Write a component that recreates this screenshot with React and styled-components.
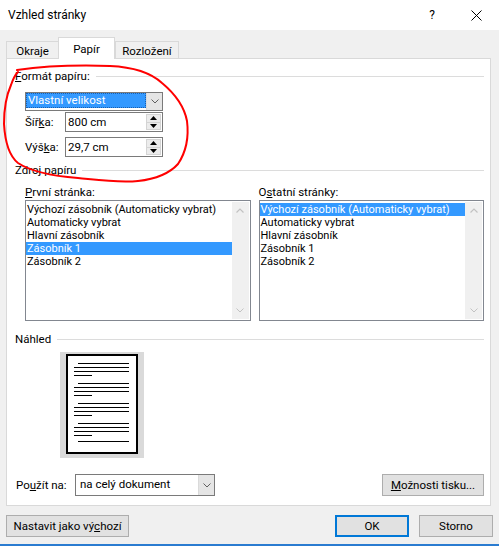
import React from 'react';
import styled, { createGlobalStyle } from 'styled-components';

const GlobalStyle = createGlobalStyle`
  html, body { margin: 0; padding: 0; background: #fff; }
  body {
    font-family: "Segoe UI", Roboto, "Noto Sans", sans-serif;
    font-size: 11.5px;
    color: #000;
  }
  * { box-sizing: border-box; }
`;

const Window = styled.div`
  position: relative;
  width: 499px;
  height: 546px;
  background: #f0f0f0;
  border-bottom: 2px solid #2a7bd0;
  display: flex;
  flex-direction: column;
  overflow: hidden;
`;

const TitleBar = styled.div`
  height: 30px;
  background: #fff;
  display: flex;
  align-items: center;
  padding: 0 17px 0 8px;
`;

const Title = styled.div`
  flex: 1;
  font-size: 12px;
  line-height: 16px;
`;

const TitleButton = styled.div`
  width: ${({ $w }) => $w}px;
  margin-right: ${({ $mr }) => $mr || 0}px;
  display: flex;
  justify-content: center;
  align-items: center;
  font-size: 12px;
  line-height: 16px;
`;

const Body = styled.div`
  flex: 1;
  padding: 0 6px;
  display: flex;
  flex-direction: column;
`;

const TabRow = styled.div`
  height: 29px;
  display: flex;
  align-items: flex-end;
`;

const Tab = styled.div`
  position: relative;
  width: ${({ $w }) => $w}px;
  height: ${({ $active }) => ($active ? 22 : 17)}px;
  margin-bottom: ${({ $active }) => ($active ? 0 : 1)}px;
  margin-left: ${({ $ml }) => $ml || 0}px;
  padding-top: ${({ $active }) => ($active ? 0 : 1)}px;
  background: ${({ $active }) => ($active ? '#fff' : '#f0f0f0')};
  border: 1px solid #d9d9d9;
  border-bottom: none;
  z-index: ${({ $active }) => ($active ? 2 : 1)};
  display: flex;
  align-items: center;
  justify-content: center;
  line-height: 16px;
`;

const Panel = styled.div`
  margin-top: -1px;
  width: 485px;
  height: 448px;
  background: #fff;
  border: 1px solid #d9d9d9;
  padding: 0 6px 0 8px;
  display: flex;
  flex-direction: column;
`;

const Heading = styled.div`
  margin-top: ${({ $mt }) => $mt}px;
  height: 16px;
  line-height: 16px;
  display: flex;
  align-items: center;
  gap: 6px;
  &::after {
    content: '';
    flex: 1;
    height: 1px;
    background: #dcdcdc;
  }
`;

const Indent = styled.div`
  padding-left: 10px;
  display: flex;
  flex-direction: column;
`;

const Key = styled.span`
  text-decoration: underline;
`;

const Combo = styled.div`
  margin-top: ${({ $mt }) => $mt || 0}px;
  width: ${({ $w }) => $w}px;
  height: ${({ $h }) => $h}px;
  border: 1px solid #7a7a7a;
  background: #fff;
  display: flex;
  align-items: stretch;
`;

const ComboValue = styled.div`
  flex: 1;
  padding-left: ${({ $sel }) => ($sel ? 2 : 4)}px;
  line-height: ${({ $sel }) => ($sel ? 14 : 19)}px;
  height: ${({ $sel }) => ($sel ? '15px' : 'auto')};
  background: ${({ $sel }) => ($sel ? '#3399ff' : 'transparent')};
  color: ${({ $sel }) => ($sel ? '#fff' : '#000')};
  outline: ${({ $sel }) => ($sel ? '1px dotted #1a5fb0' : 'none')};
  outline-offset: -1px;
  white-space: nowrap;
`;

const DropButton = styled.div`
  width: 16px;
  background: #e5e5e5;
  border-left: 1px solid #dadada;
  display: flex;
  align-items: center;
  justify-content: center;
`;

const FieldRow = styled.div`
  margin-top: ${({ $mt }) => $mt}px;
  height: 20px;
  display: flex;
  align-items: center;
`;

const FieldLabel = styled.div`
  width: 40px;
  line-height: 16px;
`;

const SpinBox = styled.div`
  width: 98px;
  height: 20px;
  border: 1px solid #7a7a7a;
  background: #fff;
  display: flex;
`;

const SpinValue = styled.div`
  flex: 1;
  padding-left: 2px;
  line-height: 18px;
`;

const Spinner = styled.div`
  width: 15px;
  margin: 1px 1px 1px 0;
  border: 1px solid #d4d4d4;
  background: #d4d4d4;
  display: flex;
  flex-direction: column;
  gap: 1px;
`;

const SpinHalf = styled.div`
  flex: 1;
  background: #ececec;
  display: flex;
  align-items: center;
  justify-content: center;
`;

const Columns = styled.div`
  margin-top: 6px;
  display: flex;
  gap: 8px;
`;

const Column = styled.div`
  width: 226px;
  display: flex;
  flex-direction: column;
`;

const ColumnLabel = styled.div`
  height: 16px;
  line-height: 16px;
`;

const ListBox = styled.div`
  height: 121px;
  border: 1px solid #828790;
  background: #fff;
  display: flex;
`;

const ListItems = styled.div`
  flex: 1;
  padding-top: 2px;
`;

const ListItem = styled.div`
  height: 13px;
  font-size: 11px;
  line-height: 13px;
  padding-left: 1px;
  white-space: nowrap;
  overflow: hidden;
  background: ${({ $sel }) => ($sel ? '#3399ff' : 'transparent')};
  color: ${({ $sel }) => ($sel ? '#fff' : '#000')};
`;

const ScrollBar = styled.div`
  width: 17px;
  margin: 1px 1px 1px 0;
  background: #f0f0f0;
  display: flex;
  flex-direction: column;
  justify-content: space-between;
  align-items: center;
  padding: 6px 0;
`;

const PreviewFrame = styled.div`
  margin-top: 5px;
  margin-left: 45px;
  width: 84px;
  height: 106px;
  background: #dadada;
  padding: 2px 6px;
`;

const Paper = styled.div`
  width: 72px;
  height: 100px;
  background: #fff;
  border: 2px solid #000;
`;

const ApplyRow = styled.div`
  margin-top: 16px;
  height: 22px;
  display: flex;
  align-items: center;
`;

const ApplyLabel = styled.div`
  width: 60px;
  padding-left: 1px;
  line-height: 16px;
`;

const Spacer = styled.div`
  flex: 1;
`;

const Button = styled.div`
  width: ${({ $w }) => $w}px;
  height: 22px;
  background: #e1e1e1;
  border: ${({ $default }) => ($default ? '2px solid #0078d7' : '1px solid #adadad')};
  display: flex;
  align-items: center;
  justify-content: center;
  line-height: 16px;
  white-space: nowrap;
`;

const ButtonRow = styled.div`
  margin-top: 9px;
  display: flex;
  gap: 10px;
`;

const Annotation = styled.svg`
  position: absolute;
  left: 0;
  top: 0;
  pointer-events: none;
  z-index: 5;
`;

const Chevron = ({ color = '#606060' }) => (
  <svg width="8" height="5" viewBox="0 0 8 5">
    <path d="M0.5 0.5 L4 4 L7.5 0.5" fill="none" stroke={color} strokeWidth="1" />
  </svg>
);

const ChevronUp = () => (
  <svg width="8" height="5" viewBox="0 0 8 5">
    <path d="M0.5 4.5 L4 1 L7.5 4.5" fill="none" stroke="#c2c2c2" strokeWidth="1.2" />
  </svg>
);

const Triangle = ({ up }) => (
  <svg width="7" height="4" viewBox="0 0 7 4">
    <path d={up ? 'M0 4 L3.5 0 L7 4 Z' : 'M0 0 L3.5 4 L7 0 Z'} fill="#000" />
  </svg>
);

const trays = [
  'Výchozí zásobník (Automaticky vybrat)',
  'Automaticky vybrat',
  'Hlavní zásobník',
  'Zásobník 1',
  'Zásobník 2',
];

const TrayList = ({ selected }) => (
  <ListBox>
    <ListItems>
      {trays.map((t, i) => (
        <ListItem key={t} $sel={i === selected}>{t}</ListItem>
      ))}
    </ListItems>
    <ScrollBar>
      <ChevronUp />
      <Chevron color="#c2c2c2" />
    </ScrollBar>
  </ListBox>
);

const PaperLines = () => {
  const lines = [];
  [9, 29, 49, 69].forEach((y) => {
    lines.push([10, 61, y], [6, 61, y + 4], [6, 61, y + 8], [6, 24, y + 12]);
  });
  lines.push([10, 61, 87]);
  return (
    <svg width="68" height="96" viewBox="0 0 68 96">
      {lines.map(([x1, x2, y], i) => (
        <line key={i} x1={x1} x2={x2} y1={y - 1.5} y2={y - 1.5} stroke="#000" strokeWidth="1" />
      ))}
    </svg>
  );
};

const circle =
  'M 17 70 C 45 66, 80 65, 110 66 C 132 67, 150 72, 162 83 C 174 93, 184 105, 187 121 C 189 137, 186 152, 178 164 C 169 174, 156 179, 138 181 C 118 183, 98 180, 78 178 C 53 176, 30 171, 18 163 C 8 155, 5 141, 4 124 C 4 108, 7 94, 11 85 C 13 79, 15 75, 18 72';

export default function App() {
  return (
    <>
      <GlobalStyle />
      <Window>
        <TitleBar>
          <Title>Vzhled stránky</Title>
          <TitleButton $w={10} $mr={34}>?</TitleButton>
          <TitleButton $w={11}>
            <svg width="11" height="11" viewBox="0 0 11 11">
              <path d="M0.5 0.5 L10.5 10.5 M10.5 0.5 L0.5 10.5" stroke="#000" strokeWidth="1" />
            </svg>
          </TitleButton>
        </TitleBar>
        <Body>
          <TabRow>
            <Tab $w={53}>Okraje</Tab>
            <Tab $w={57} $ml={-1} $active>Papír</Tab>
            <Tab $w={64}>Rozložení</Tab>
          </TabRow>
          <Panel>
            <Heading $mt={9}>
              <span><Key>F</Key>ormát papíru:</span>
            </Heading>
            <Indent>
              <Combo $mt={8} $w={138} $h={19}>
                <ComboValue $sel>Vlastní velikost</ComboValue>
                <DropButton><Chevron /></DropButton>
              </Combo>
              <FieldRow $mt={1}>
                <FieldLabel>Šíř<Key>k</Key>a:</FieldLabel>
                <SpinBox>
                  <SpinValue>800 cm</SpinValue>
                  <Spinner>
                    <SpinHalf><Triangle up /></SpinHalf>
                    <SpinHalf><Triangle /></SpinHalf>
                  </Spinner>
                </SpinBox>
              </FieldRow>
              <FieldRow $mt={5}>
                <FieldLabel>Výš<Key>k</Key>a:</FieldLabel>
                <SpinBox>
                  <SpinValue>29,7 cm</SpinValue>
                  <Spinner>
                    <SpinHalf><Triangle up /></SpinHalf>
                    <SpinHalf><Triangle /></SpinHalf>
                  </Spinner>
                </SpinBox>
              </FieldRow>
            </Indent>
            <Heading $mt={5}>
              <span>Zdroj papíru</span>
            </Heading>
            <Indent>
              <Columns>
                <Column>
                  <ColumnLabel><Key>P</Key>rvní stránka:</ColumnLabel>
                  <TrayList selected={3} />
                </Column>
                <Column>
                  <ColumnLabel>O<Key>s</Key>tatní stránky:</ColumnLabel>
                  <TrayList selected={0} />
                </Column>
              </Columns>
            </Indent>
            <Heading $mt={10}>
              <span>Náhled</span>
            </Heading>
            <PreviewFrame>
              <Paper>
                <PaperLines />
              </Paper>
            </PreviewFrame>
            <ApplyRow>
              <ApplyLabel>Po<Key>u</Key>žít na:</ApplyLabel>
              <Combo $w={140} $h={22}>
                <ComboValue>na celý dokument</ComboValue>
                <DropButton><Chevron /></DropButton>
              </Combo>
              <Spacer />
              <Button $w={102}><Key>M</Key>ožnosti tisku...</Button>
            </ApplyRow>
          </Panel>
          <ButtonRow>
            <Button $w={123}>Nastavit jako vý<Key>c</Key>hozí</Button>
            <Spacer />
            <Button $w={74} $default>OK</Button>
            <Button $w={74}>Storno</Button>
          </ButtonRow>
        </Body>
        <Annotation width="499" height="547" viewBox="0 0 499 547">
          <path d={circle} fill="none" stroke="#ff0000" strokeWidth="2" strokeLinecap="round" strokeLinejoin="round" />
        </Annotation>
      </Window>
    </>
  );
}
